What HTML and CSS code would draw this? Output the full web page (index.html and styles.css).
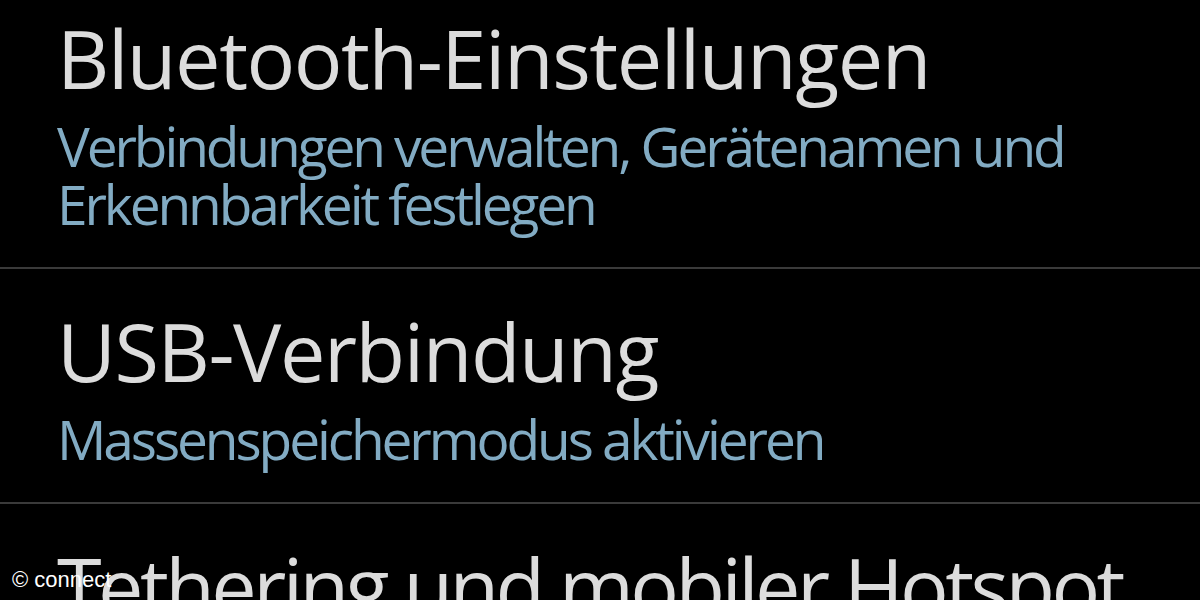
FILE: index.html
```html
<!DOCTYPE html>
<html lang="de">
<head>
<meta charset="utf-8">
<link rel="stylesheet" href="styles.css">
</head>
<body>
<div class="screen">
  <ul class="prefs">
    <li class="pref">
      <div class="pref-title">Bluetooth-Einstellungen</div>
      <div class="pref-summary">Verbindungen verwalten, Gerätenamen und<br>Erkennbarkeit festlegen</div>
    </li>
    <li class="pref">
      <div class="pref-title">USB-Verbindung</div>
      <div class="pref-summary">Massenspeichermodus aktivieren</div>
    </li>
    <li class="pref">
      <div class="pref-title pref-title-tight">Tethering und mobiler Hotspot</div>
      <div class="pref-summary">Mobile Datenverbindung freigeben</div>
    </li>
  </ul>
  <div class="credit">© connect</div>
</div>
</body>
</html>
```
FILE: styles.css
```css
html, body {
  margin: 0;
  padding: 0;
  background: #000;
}
.screen {
  position: relative;
  width: 1200px;
  height: 600px;
  overflow: hidden;
  background: #000;
}
.prefs {
  list-style: none;
  margin: -24px 0 0 0;
  padding: 0;
}
.pref {
  padding: 41px 0 34px 57px;
  border-bottom: 2px solid #3a3a3a;
}
.pref-title {
  font-family: "Open Sans", "Noto Sans", sans-serif;
  font-size: 81px;
  line-height: 1;
  letter-spacing: -1.45px;
  color: #dcdcdc;
  white-space: nowrap;
}
.pref-title-tight {
  letter-spacing: -3.6px;
}
.pref-summary {
  margin-top: 19px;
  font-family: "Open Sans", "Noto Sans", sans-serif;
  font-size: 55px;
  line-height: 58px;
  letter-spacing: -3.1px;
  color: #82abc3;
  white-space: nowrap;
}
.credit {
  position: absolute;
  left: 12px;
  bottom: 9px;
  font-family: "Liberation Sans", Arial, sans-serif;
  font-size: 22px;
  line-height: 1;
  color: #fff;
}
```
